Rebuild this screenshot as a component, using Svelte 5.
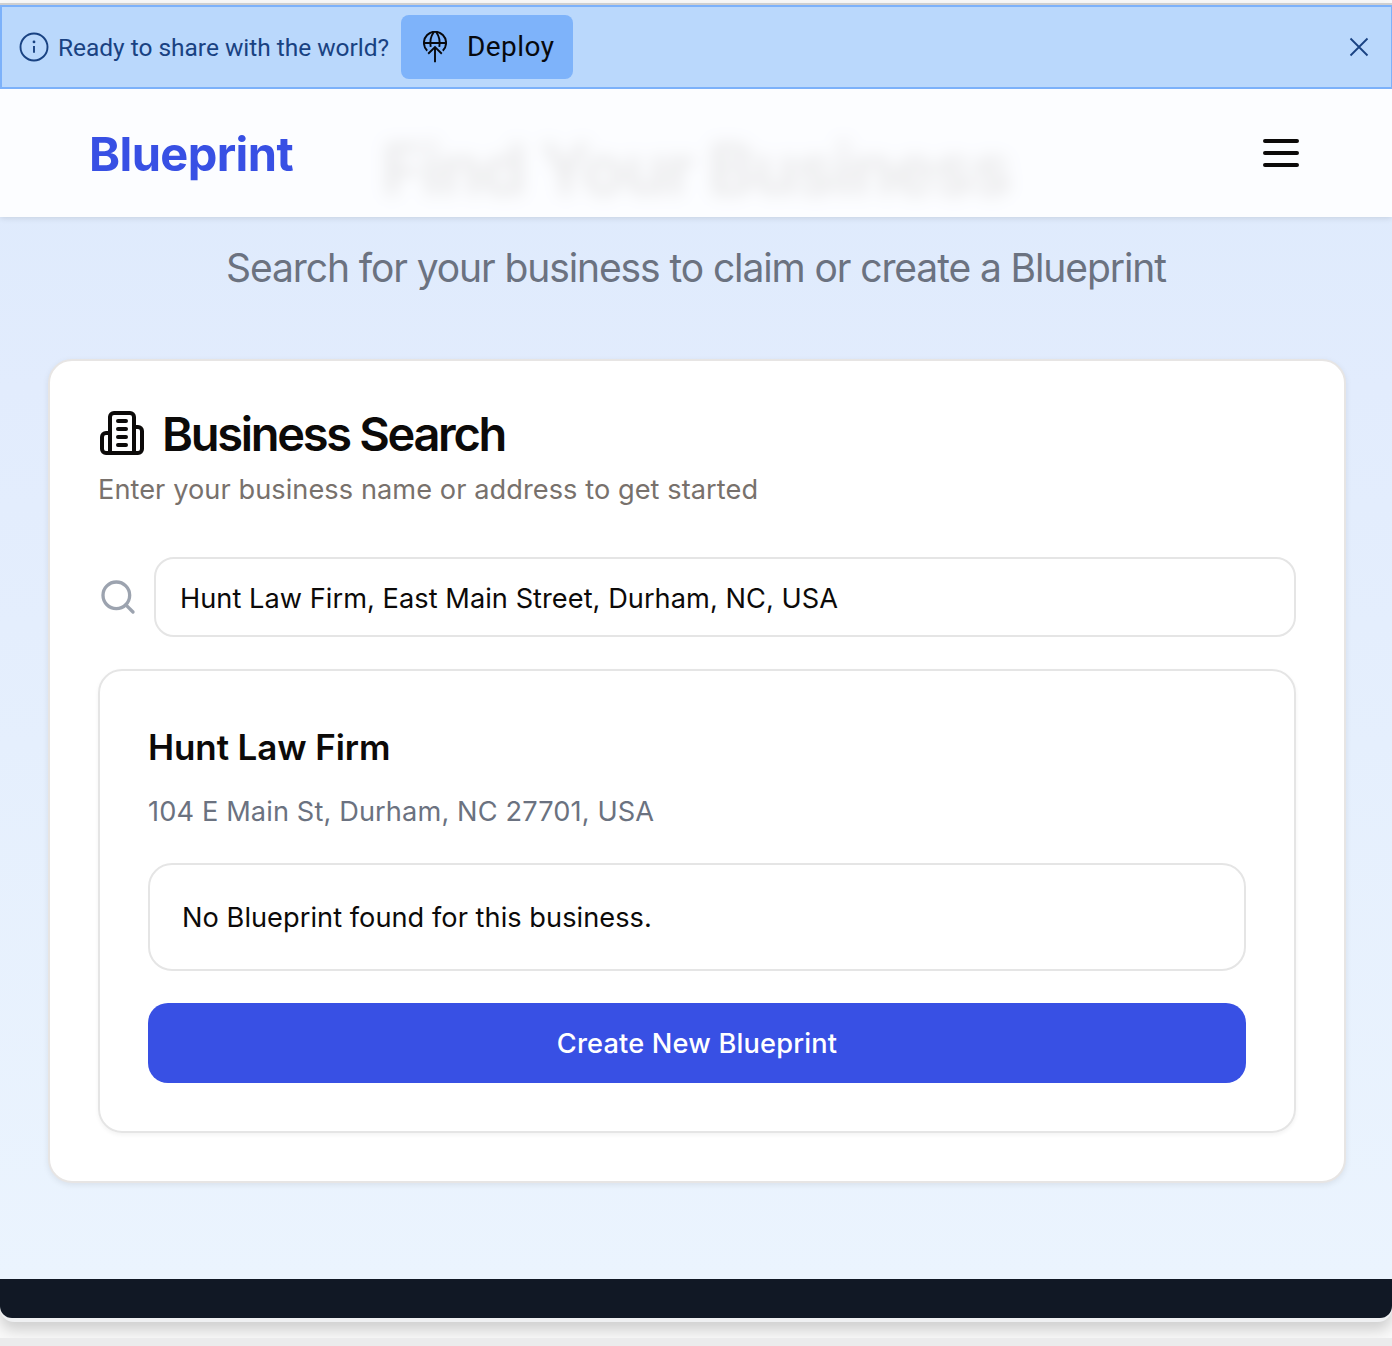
<script>
  let query = $state('Hunt Law Firm, East Main Street, Durham, NC, USA');
  const business = {
    name: 'Hunt Law Firm',
    address: '104 E Main St, Durham, NC 27701, USA'
  };
</script>

<div class="screen">
  <div class="window">
    <aside class="banner">
      <svg class="info" viewBox="0 0 30 30" width="30" height="30" fill="none" stroke="currentColor" stroke-width="1.9">
        <circle cx="15" cy="15" r="13.5" />
        <path d="M15 14v6.7" />
        <circle cx="15" cy="9.9" r="1.4" fill="currentColor" stroke="none" />
      </svg>
      <span class="prompt">Ready to share with the world?</span>
      <button class="deploy">
        <svg viewBox="0 0 24 32" width="24" height="32" fill="none" stroke="currentColor" stroke-width="1.9">
          <path d="M4.200 19.700A11.100 11.100 0 1 1 19.800 19.700" />
          <path d="M1 12h22M7.700 15.800C6.700 10 8.300 4.500 10.700 1.200M16.300 15.800C17.300 10 15.700 4.500 13.300 1.200" />
          <path d="M12 31.300V16.500M5.200 22.700L12 16l6.800 6.700" />
        </svg>
        <span>Deploy</span>
      </button>
      <button class="close" aria-label="Close">
        <svg viewBox="0 0 20 20" width="20" height="20" fill="none" stroke="currentColor" stroke-width="1.8">
          <path d="M1.500 1.500l17 17M18.500 1.500l-17 17" />
        </svg>
      </button>
    </aside>

    <div class="page">
      <header>
        <span class="brand">Blueprint</span>
        <button class="menu" aria-label="Menu">
          <svg viewBox="0 0 36 28" width="36" height="28" fill="none" stroke="currentColor" stroke-width="4" stroke-linecap="round">
            <path d="M2 2h32M2 14h32M2 26h32" />
          </svg>
        </button>
      </header>

      <main>
        <h1><span>Find Your Business</span></h1>
        <p class="lead"><span>Search for your business to claim or create a Blueprint</span></p>

        <section class="card">
          <div class="heading">
            <svg viewBox="0 0 24 24" width="48" height="48" fill="none" stroke="currentColor" stroke-width="2" stroke-linecap="round" stroke-linejoin="round">
              <path d="M6 22V4a2 2 0 0 1 2-2h8a2 2 0 0 1 2 2v18Z" />
              <path d="M6 12H4a2 2 0 0 0-2 2v6a2 2 0 0 0 2 2h2" />
              <path d="M18 9h2a2 2 0 0 1 2 2v9a2 2 0 0 1-2 2h-2" />
              <path d="M10 6h4M10 10h4M10 14h4M10 18h4" />
            </svg>
            <h2>Business Search</h2>
          </div>
          <p class="hint">Enter your business name or address to get started</p>

          <div class="search">
            <svg viewBox="0 0 24 24" width="40" height="40" fill="none" stroke="currentColor" stroke-width="2" stroke-linecap="round">
              <circle cx="11" cy="11" r="8" />
              <path d="M21 21l-4.300-4.300" />
            </svg>
            <input bind:value={query} aria-label="Business name or address" />
          </div>

          <article class="result">
            <h3>{business.name}</h3>
            <p class="address">{business.address}</p>
            <div class="notice"><span>No Blueprint found for this business.</span></div>
            <button class="create"><span>Create New Blueprint</span></button>
          </article>
        </section>
      </main>
      <footer></footer>
    </div>
  </div>
  <div class="edge"></div>
</div>

<style>
  :global(body) {
    margin: 0;
    background: #f9f9f9;
  }
  .screen,
  .screen * {
    box-sizing: border-box;
  }
  .screen {
    display: flex;
    flex-direction: column;
    justify-content: space-between;
    height: 1346px;
    padding-top: 3px;
    overflow: hidden;
    font-family: Inter, 'Liberation Sans', sans-serif;
    color: #0c0a09;
    white-space: nowrap;
  }
  .window {
    border-top: 2px solid #cfcfcf;
    border-bottom: 4px solid #eff0f2;
    border-radius: 0 0 14px 14px;
    background: #eff0f2;
    box-shadow: 0 8px 14px rgba(0, 0, 0, 0.17);
  }
  .edge {
    position: relative;
    height: 8px;
    background: #ebebec;
  }
  button {
    border: 0;
    padding: 0;
    background: none;
    font: inherit;
    color: inherit;
    display: flex;
    align-items: center;
  }
  svg {
    display: block;
    flex: none;
  }
  h1, h2, h3, p {
    margin: 0;
  }

  .banner {
    display: flex;
    align-items: center;
    height: 84px;
    padding: 0 22px 0 17px;
    border: 2px solid #7cb1fa;
    border-right-width: 1px;
    background: #bad8fc;
    color: #194282;
    font-family: Roboto, sans-serif;
  }
  .prompt {
    width: 352px;
    padding: 1px 0 0 9px;
    font-size: 24.5px;
    letter-spacing: -0.03px;
  }
  .deploy {
    width: 172px;
    height: 64px;
    padding-left: 22px;
    gap: 20px;
    border-radius: 8px;
    background: #7eb3fa;
    color: #07090d;
    font-size: 28px;
    letter-spacing: 0.45px;
  }
  .deploy span {
    padding-bottom: 2px;
  }
  .close {
    margin-left: auto;
  }

  .page {
    position: relative;
    border-radius: 0 0 12px 12px;
    overflow: hidden;
  }
  header {
    position: absolute;
    inset: 0 0 auto;
    z-index: 1;
    display: flex;
    align-items: center;
    justify-content: space-between;
    height: 128px;
    padding: 0 93px 0 89px;
    background: rgba(254, 254, 255, 0.92);
    backdrop-filter: blur(8px);
    box-shadow: 0 1px 6px rgba(0, 0, 0, 0.12);
  }
  .brand {
    padding-top: 2px;
    font-size: 47px;
    line-height: 64px;
    font-weight: 700;
    letter-spacing: -0.6px;
    color: #3850e4;
  }
  main {
    height: 1190px;
    padding: 40px 48px 0;
    background: linear-gradient(#ddeafc, #e2ecfd 25%, #e5effd 55%, #ebf4fe);
  }
  h1 {
    text-align: center;
    font-size: 71px;
    line-height: 80px;
    font-weight: 700;
    letter-spacing: -1.8px;
  }
  .lead {
    padding: 31px 0 63px;
    text-align: center;
    font-size: 39px;
    line-height: 56px;
    letter-spacing: -1.1px;
    color: #6b7280;
  }
  .card {
    height: 824px;
    margin-right: -2px;
    padding: 48px;
    border: 2px solid #e7e5e4;
    border-radius: 24px;
    background: #fff;
    box-shadow: 0 2px 6px rgba(0, 0, 0, 0.08);
  }
  .heading {
    display: flex;
    align-items: center;
    gap: 16px;
    height: 48px;
  }
  h2 {
    padding-top: 2px;
    font-size: 47px;
    line-height: 48px;
    font-weight: 600;
    letter-spacing: -2.3px;
  }
  .hint {
    padding-top: 13px;
    font-size: 27.2px;
    line-height: 40px;
    letter-spacing: 0.06px;
    color: #78716c;
  }
  .search {
    display: flex;
    align-items: center;
    gap: 16px;
    margin-top: 47px;
    color: #9ca3af;
  }
  input {
    flex: 1;
    height: 80px;
    padding: 2px 24px 0;
    border: 2px solid #e5e5e5;
    border-radius: 20px;
    background: #fff;
    font: 27.2px Inter, sans-serif;
    letter-spacing: 0.04px;
    color: #0c0a09;
  }
  .result {
    height: 464px;
    margin-top: 32px;
    padding: 48px;
    border: 2px solid #e5e5e5;
    border-radius: 24px;
    box-shadow: 0 2px 4px rgba(0, 0, 0, 0.05);
  }
  h3 {
    font-size: 35px;
    line-height: 56px;
    font-weight: 600;
    letter-spacing: -0.1px;
  }
  .address {
    padding: 17px 0 31px;
    font-size: 27.2px;
    line-height: 40px;
    letter-spacing: 0.12px;
    color: #6b7280;
  }
  .notice {
    display: flex;
    align-items: center;
    height: 108px;
    padding: 0 32px;
    border: 2px solid #e5e5e5;
    border-radius: 24px;
    font-size: 27.2px;
    letter-spacing: 0.04px;
  }
  .create {
    width: 100%;
    height: 80px;
    margin-top: 32px;
    justify-content: center;
    border-radius: 20px;
    background: #3850e4;
    color: #fff;
    font-size: 27.2px;
    font-weight: 500;
    letter-spacing: 0.18px;
  }
  footer {
    height: 39px;
    background: #111825;
  }
</style>
